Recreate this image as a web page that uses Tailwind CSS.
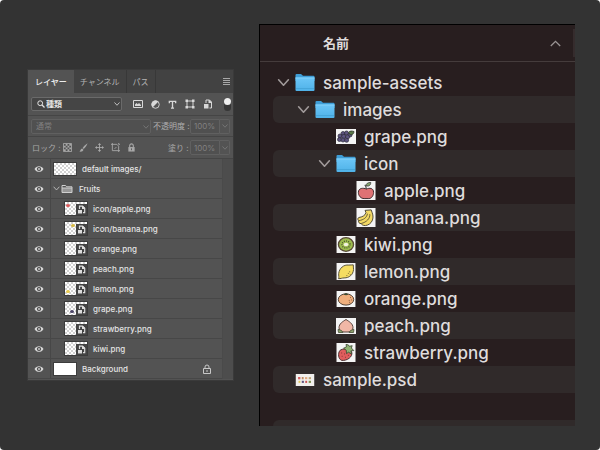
<!DOCTYPE html>
<html lang="ja">
<head>
<meta charset="utf-8">
<meta name="viewport" content="width=device-width, initial-scale=1">
<title>sample-assets</title>
<script src="https://cdn.jsdelivr.net/npm/@tailwindcss/browser@4"></script>
</head>
<body class="bg-white font-['Inter','Noto_Sans_CJK_JP',sans-serif]">

<svg class="absolute size-0" aria-hidden="true">
  <defs>
    <linearGradient id="blue" x1="0" y1="0" x2="0" y2="1"><stop offset="0" stop-color="#6cc6f7"/><stop offset="1" stop-color="#4fb2e8"/></linearGradient>
  </defs>
  <symbol id="down" viewBox="0 0 12 12"><path d="M1.5 3.5 6 8.5l4.500-5" fill="none" stroke="currentColor" stroke-width="1.500" stroke-linecap="round" stroke-linejoin="round"/></symbol>
  <symbol id="eye" viewBox="0 0 10 8"><path d="M.5 4C2.500.2 7.500.2 9.500 4 7.500 7.800 2.500 7.800.5 4z" fill="#d8d8d8"/><circle cx="5" cy="4" r="2.100" fill="#4a4a4a"/><circle cx="5" cy="4" r="1" fill="#c8c8c8"/></symbol>
  <symbol id="group" viewBox="0 0 12 10"><path d="M1 8.500v-7h3.600l1 1.300H11v5.700z" fill="none" stroke="#d0d0d0"/><path d="M1 4h10v4.500H1z" fill="#d0d0d0" opacity=".55"/><path d="M1 4h10" stroke="#d0d0d0"/></symbol>
  <symbol id="smart" viewBox="0 0 11 11"><path d="M0 0h11v11H0z" fill="#444"/><path d="M3.500 5V2.200H6.500L8.700 4.300V8.700H7" fill="none" stroke="#ddd" stroke-width="1.200"/><path d="M6 2v3h3V4L7 2z" fill="#ddd"/><path d="M2 6h4v3.500H2z" fill="#ddd"/></symbol>
  <symbol id="folder" viewBox="0 0 20 19"><path d="M.5 2Q.5 1 1.500 1H6l2 1.800h10.500q1 0 1 1V8H.5z" fill="#3e9dd6"/><path d="M.5 4.500h19V17q0 1-1 1h-17q-1 0-1-1z" fill="url(#blue)"/><path d="M.5 5h19" stroke="#83d2fb"/><path d="M1 15.500h18" stroke="#43a2d6" stroke-width=".8"/></symbol>
  <symbol id="grape" viewBox="0 0 20 15"><path d="M0 0h20v15H0z" fill="#f4f4f4"/><g fill="#5d547f" stroke="#292738" stroke-width=".7"><circle cx="7" cy="4.500" r="2"/><circle cx="10.500" cy="4" r="2"/><circle cx="14" cy="6" r="2"/><circle cx="4" cy="7" r="2"/><circle cx="7.700" cy="7.500" r="2.100"/><circle cx="11.500" cy="8" r="2.100"/><circle cx="3.500" cy="10.500" r="2"/><circle cx="7" cy="11" r="2"/><circle cx="10.600" cy="11.300" r="2"/></g><path d="M12.500 3.500C14 1.500 16 2 18 2.500c0 2-1.500 3.500-3.700 3.300z" fill="#5a7a48" stroke="#2d3528" stroke-width=".8"/></symbol>
  <symbol id="apple" viewBox="0 0 20 20"><path d="M0 0h20v20H0z" fill="#f4f4f4"/><path d="M10.500 8.500c3-1.500 7.500-1.300 7.500 3.500 0 3-2 6.500-5 6.500H8c-3.500 0-6-3-6-6.500 0-4.800 5-5 8.500-3.500z" fill="#df7274" stroke="#3a2729"/><path d="M10.300 8.500q0-3-1.600-4.500" fill="none" stroke="#383533" stroke-width="1.100"/><path d="M10 5c0-2.300 2-3.500 5-3.500 0 3-2 4.500-5 3.500z" fill="#87a56e" stroke="#333" stroke-width=".8"/></symbol>
  <symbol id="banana" viewBox="0 0 20 20"><path d="M0 0h20v20H0z" fill="#f4f4f4"/><path d="M9 2.500 15.500 2l1 3c2.500 6-.5 12.500-7 13.500-3 0-4-1-4.500-2-2.500-.2-3-1.500-2.800-3C1 12 1.200 10.500 2.500 10 6 9.500 9 8 10 5z" fill="#f3d964" stroke="#494332"/><path d="M11.500 6C11 10 7.500 12.500 2.500 13.300M14 6.500c.5 4.500-3.500 8.500-9 9.800" fill="none" stroke="#544c30" stroke-width=".9"/></symbol>
  <symbol id="kiwi" viewBox="0 0 20 18"><path d="M0 0h20v18H0z" fill="#f4f4f4"/><ellipse cx="10" cy="9" rx="8" ry="7.200" fill="#9dbb4e" stroke="#584936" stroke-width="1.400"/><ellipse cx="10" cy="9" rx="4.300" ry="3.700" fill="none" stroke="#434b2d" stroke-width="1.300" stroke-dasharray="1 1.300"/><ellipse cx="10" cy="9" rx="2.500" ry="1.800" fill="#f2f2dd"/></symbol>
  <symbol id="lemon" viewBox="0 0 20 18"><path d="M0 0h20v18H0z" fill="#f4f4f4"/><path d="M2 16.500c1-1.500 0-3 .3-5.500C3 5.500 7.500 1.500 13 2.200c2 .3 3-.5 4.700-.2-.4 1.500.6 3 .3 5-.6 5.500-4.500 8.800-10 8.800-2.500 0-3.500 1-6 .7z" fill="#f5dd62" stroke="#514a34"/><path d="M12 11h.9M10.500 13.300h.9M14 12.300h.9M13.500 9.300h.9" stroke="#6a5b2e"/></symbol>
  <symbol id="orange" viewBox="0 0 20 17"><path d="M0 0h20v17H0z" fill="#f4f4f4"/><ellipse cx="10" cy="9" rx="8.200" ry="6" fill="#efae7c" stroke="#4a3a2f"/><path d="m8 3.500 4 .2M10 2v2.500" stroke="#3d4b30" stroke-width="1.300"/><path d="M14.500 7h.8M13 10h.8M15.300 9.500h.8M13.500 12h.8" stroke="#6b4630"/></symbol>
  <symbol id="peach" viewBox="0 0 20 16"><path d="M0 0h20v16H0z" fill="#f4f4f4"/><path d="M10 1.500c3 2 7 4 7 8.300 0 2.700-2.500 4.200-5 4.200H8c-2.500 0-5-1.500-5-4.200 0-4.300 4-6.300 7-8.300z" fill="#f0b7a6" stroke="#5b4640"/><path d="M2 11.500c2 0 4 1 5 3H2.500zM18 11.500c-2 0-4 1-5 3h4.500z" fill="#8da36c" stroke="#464c36" stroke-width=".8"/></symbol>
  <symbol id="strawberry" viewBox="0 0 20 20"><path d="M0 0h20v20H0z" fill="#f4f4f4"/><path d="M3.500 8C6 5.500 13 5.500 16 9.500c1.500 5-5 9.500-10.500 8.800C1.800 17 1.300 11 3.500 8z" fill="#df5d5d" stroke="#432c2c"/><path d="m7.500 5.500 3-1.500-.5-2.500 2.500.5 1 1.500 3-.7-.8 2.500 2.500 2.700-3 .2.500 3.500-3-2-2.200 1.500-.2-3.500z" fill="#90b273" stroke="#33402b" stroke-width=".8"/><path d="M5 10.500h.9M8 11.500h.9M5.500 14h.9M9 15h.9M12 13h.9" stroke="#762e30"/></symbol>
  <symbol id="psd" viewBox="0 0 20 13"><path d="M0 0h20v13H0z" fill="#f1efec"/><path d="M2.500 4.500h2.500" stroke="#d45f60" stroke-width="2.500"/><path d="M6.500 4.500h2" stroke="#bd8c62" stroke-width="2.500"/><path d="M10 4.500h2.500" stroke="#e3a77a" stroke-width="2.200"/><path d="M14 4.500h2.500" stroke="#bfa678" stroke-width="2.200"/><path d="M3 8.500h2" stroke="#e2c85c" stroke-width="2.200"/><path d="M6.500 8.500h2.300" stroke="#5d547f" stroke-width="2.300"/><path d="M10.300 8.500h2" stroke="#cc4f50" stroke-width="2.300"/><path d="M14 8.500h2.500" stroke="#7f9150" stroke-width="2.300"/></symbol>
  <symbol id="checks" viewBox="0 0 10 10"><path d="M.5.5h9v9h-9z" fill="none" stroke="currentColor"/><path d="M3 1h2v2H3zM7 1h2v2H7zM1 3h2v2H1zM5 3h2v2H5zM3 5h2v2H3zM7 5h2v2H7zM1 7h2v2H1zM5 7h2v2H5z" fill="currentColor"/></symbol>
  <symbol id="brush" viewBox="0 0 10 10"><path d="M9.500.3C7 2 5.300 3.700 4 5.500l1.300 1.300C7 5 8.500 3 9.500.3z" fill="currentColor"/><path d="M3.500 6 5 7.500C4.500 9.500 2 10 .3 9.300 1.800 8.800 1.500 6.500 3.500 6z" fill="currentColor"/></symbol>
  <symbol id="move" viewBox="0 0 10 10"><path d="M5 1v8M1 5h8" stroke="currentColor"/><path d="m5 0 1.800 2.200H3.200zM5 10 3.200 7.800h3.600zM0 5l2.200-1.800v3.600zM10 5 7.800 6.800V3.200z" fill="currentColor"/></symbol>
  <symbol id="board" viewBox="0 0 10 10"><path d="M0 1.500h6.500l2 2V10M1.500 0v8.500H10" fill="none" stroke="currentColor"/><path d="m4 6.500 2-2M8.500 0v1.500H10" fill="none" stroke="currentColor"/></symbol>
  <symbol id="lock" viewBox="0 0 10 10"><path d="M3 5V3a2 2 0 0 1 4 0v2" fill="none" stroke="currentColor" stroke-width="1.200"/><path d="M1.500 4.500h7v5h-7z" fill="currentColor"/><path d="M5 6v2" stroke="#535353"/></symbol>
  <symbol id="lockline" viewBox="0 0 10 10"><path d="M3 4.500V3a2 2 0 0 1 4 0v1.500M1.500 4.500h7v5h-7zM5 6v2" fill="none" stroke="currentColor"/></symbol>
</svg>

<main class="grid min-h-screen grid-cols-[207fr_316fr] items-start gap-x-[25px] rounded bg-[#333333] pt-6 pr-[25px] pb-6 pl-[27px]">

  <section aria-label="レイヤー" class="mt-[45px] border border-[#3a3a3a] bg-[#535353] pb-px text-[8px] leading-[10px] text-[#e4e4e4]">
    <div role="tablist" class="flex h-[23px] items-stretch bg-[#424242] text-[#b4b4b4]">
      <button role="tab" aria-selected="true" class="bg-[#535353] px-[7px] font-medium text-[#ececec]">レイヤー</button>
      <button role="tab" class="border-r border-[#383838] px-[6px]">チャンネル</button>
      <button role="tab" class="border-r border-[#383838] px-[6px]">パス</button>
      <button aria-label="メニュー" class="ml-auto px-[3px]">
        <svg class="size-[7px]" viewBox="0 0 7 7"><path d="M0 .5h7M0 2.500h7M0 4.500h7M0 6.500h7" stroke="#a8a8a8" stroke-width="1"/></svg>
      </button>
    </div>

    <div class="flex h-[23px] items-center justify-between border-b border-[#454545] pr-[2px] pl-[3px]">
      <div class="relative w-[91px]">
        <select aria-label="フィルター" class="block h-[14px] w-full appearance-none rounded-xs border border-[#6a6a6a] bg-[#454545] pl-[14px] text-[8px] leading-[12px] font-bold text-[#e4e4e4]"><option>種類</option></select>
        <svg class="pointer-events-none absolute top-[3px] left-[6px] size-2" viewBox="0 0 8 8"><circle cx="3.200" cy="3.200" r="2.400" fill="none" stroke="#e4e4e4"/><path d="m5 5 2.500 2.500" stroke="#e4e4e4" stroke-width="1.200"/></svg>
        <svg class="pointer-events-none absolute top-1 right-[2px] size-[6px]"><use href="#down"/></svg>
      </div>
      <div class="flex items-center gap-2 pl-1 text-[#d8d8d8]">
        <button aria-label="ピクセル"><svg class="block size-[10px]" viewBox="0 0 10 10"><path d="M.5 1.500h9v7h-9z" fill="none" stroke="currentColor"/><path d="M2 7V5.500L3.500 4l1.300 1.300L6 4l2 2v1z" fill="currentColor"/></svg></button>
        <button aria-label="調整"><svg class="block size-[9px]" viewBox="0 0 10 10"><circle cx="5" cy="5" r="4.200" fill="none" stroke="currentColor"/><path d="M8 2 2 8A4.200 4.200 0 0 1 8 2z" fill="currentColor"/></svg></button>
        <button aria-label="テキスト"><svg class="block size-[9px]" viewBox="0 0 10 10"><path d="M1.500 3.500V1.500h7v2M5 1.500v7.500M3.300 9h3.400" fill="none" stroke="currentColor" stroke-width="1.500"/></svg></button>
        <button aria-label="シェイプ"><svg class="block size-[10px]" viewBox="0 0 10 10"><path d="M2 2h6v6H2z" fill="none" stroke="currentColor"/><path d="M.5.5h2.500v2.500H.5zM7 .5h2.500v2.500H7zM.5 7h2.500v2.500H.5zM7 7h2.500v2.500H7z" fill="currentColor"/></svg></button>
        <button aria-label="スマートオブジェクト"><svg class="block size-[10px]" viewBox="0 0 10 10"><path d="M3 4V1h3.500L8.500 3v6H6.500" fill="none" stroke="currentColor"/><path d="M5.500 1v3h3V3l-2-2zM1 5h4.500v4.500H1z" fill="currentColor"/></svg></button>
        <button role="switch" aria-checked="true" aria-label="フィルターのオン／オフ" class="ml-[3px] flex h-[13px] w-[7px] items-start rounded-full bg-[#363636]"><span class="block size-[7px] rounded-full bg-[#eeeeee]"></span></button>
      </div>
    </div>

    <div class="flex h-[21px] items-center border-b border-[#454545] pr-[3px] pl-[3px] text-[#808080]">
      <div class="relative flex-1">
        <select aria-label="描画モード" disabled class="block h-[15px] w-full appearance-none rounded-xs border border-[#606060] bg-[#505050] pl-1 text-[8px] leading-[12px] text-[#808080]"><option>通常</option></select>
        <svg class="pointer-events-none absolute top-[5px] right-[2px] size-[6px]"><use href="#down"/></svg>
      </div>
      <label for="opacity" class="w-[39px] pl-[2px] whitespace-nowrap text-[#b0b0b0]">不透明度 :</label>
      <input id="opacity" value="100%" disabled class="h-[15px] w-[30px] rounded-l-xs border border-[#606060] bg-[#505050] pl-[3px] text-[8px]">
      <button aria-label="不透明度を変更" class="flex h-[15px] w-[10px] items-center justify-center rounded-r-xs border border-l-0 border-[#606060]"><svg class="size-[6px]"><use href="#down"/></svg></button>
    </div>

    <div class="flex h-[22px] items-center border-b border-[#454545] pr-[3px] pl-1 text-[#a8a8a8]">
      <span class="w-[31px] whitespace-nowrap">ロック :</span>
      <div class="flex flex-1 items-center gap-[7px]">
        <button aria-label="透明ピクセルをロック"><svg class="block size-[9px]"><use href="#checks"/></svg></button>
        <button aria-label="画像ピクセルをロック"><svg class="block size-[9px]"><use href="#brush"/></svg></button>
        <button aria-label="位置をロック"><svg class="block size-[9px]"><use href="#move"/></svg></button>
        <button aria-label="アートボードをロック"><svg class="block size-[9px]"><use href="#board"/></svg></button>
        <button aria-label="すべてをロック"><svg class="block size-[9px]"><use href="#lock"/></svg></button>
      </div>
      <label for="fill" class="w-[22px] whitespace-nowrap">塗り :</label>
      <input id="fill" value="100%" disabled class="h-[15px] w-[30px] rounded-l-xs border border-[#606060] bg-[#505050] pl-[3px] text-[8px] text-[#808080]">
      <button aria-label="塗りを変更" class="flex h-[15px] w-[10px] items-center justify-center rounded-r-xs border border-l-0 border-[#606060] text-[#808080]"><svg class="size-[6px]"><use href="#down"/></svg></button>
    </div>

    <ul id="layers" class="mr-[10px] border-r border-[#4a4a4a] font-medium shadow-[10px_0_0_#4d4d4d]"></ul>
  </section>

  <section aria-label="sample-assets" class="border-t border-l border-black bg-[#281e1f] text-[#dfdcdc]">
    <header class="flex h-[37px] items-stretch border-b border-[#453c3c]">
      <button class="flex flex-1 items-center justify-between pr-3 pl-[63px] text-[13px] leading-4 font-bold">名前
        <svg class="h-[7px] w-[11px] text-[#9a9494]" viewBox="0 0 11 7"><path d="m.8 6 4.700-4.700L10.200 6" fill="none" stroke="currentColor" stroke-width="1.300"/></svg>
      </button>
      <span class="my-1 w-[2px] bg-[#352c2d]"></span>
    </header>
    <ul id="files" class="pt-[7px] pl-[13px]"></ul>
  </section>
</main>

<script>
  const layers = [
    ['default images/', 'plain'], ['Fruits', 'group'],
    ['icon/apple.png', 'smart', '#dc5b5b', 3, 2], ['icon/banana.png', 'smart', '#d9bb45', 8, 2],
    ['orange.png', 'smart'], ['peach.png', 'smart'], ['lemon.png', 'smart', '#e8c94c', 3, 8],
    ['grape.png', 'smart', '#4d4668', 7, 8], ['strawberry.png', 'smart'], ['kiwi.png', 'smart'],
    ['Background', 'white'],
  ];
  const thumbs = {
    plain: () => `<span class="ml-[2px] mr-[5px] h-[14px] w-6 border border-[#3c3c3c] bg-[repeating-conic-gradient(#d2d2d2_0_25%,#ffffff_0_50%)] bg-[length:4px_4px]"></span>`,
    white: () => `<span class="ml-[2px] mr-[5px] h-[14px] w-6 border border-[#3c3c3c] bg-white"></span>`,
    group: () => `<button aria-label="開閉" class="ml-[2px] text-[#c4c4c4]"><svg class="block size-[7px]"><use href="#down"/></svg></button><svg class="ml-[1px] mr-[6px] h-[10px] w-3"><use href="#group"/></svg>`,
    smart: (c, x, y) => `<span class="ml-[13px] mr-[5px] flex h-[15px] w-6 items-end border border-[#3c3c3c] bg-[repeating-conic-gradient(#d2d2d2_0_25%,#ffffff_0_50%)] bg-[length:4px_4px]"><svg class="h-[13px] w-[11px]" viewBox="0 0 11 13">${c ? `<ellipse cx="${x}" cy="${y + 1.5}" rx="2" ry="1.600" fill="${c}"/>` : ''}</svg><svg class="size-[11px]"><use href="#smart"/></svg></span>`,
  };
  document.getElementById('layers').innerHTML = layers.map(([name, kind, c, x, y]) => `
    <li class="flex h-5 items-stretch border-b border-[#474747]">
      <button aria-label="表示" class="flex w-[23px] items-center justify-center border-r border-[#474747]"><svg class="h-2 w-[10px]"><use href="#eye"/></svg></button>
      <div class="flex flex-1 items-center">${thumbs[kind](c, x, y)}<span>${name}</span>${kind === 'white' ? '<svg class="ml-auto mr-[10px] size-[10px] text-[#c8c8c8]"><use href="#lockline"/></svg>' : ''}</div>
    </li>`).join('');

  const indent = ['pl-[4px]', 'pl-[24px]', 'pl-[45px]', 'pl-[65px]'];
  const size = {
    folder: 'h-[19px]', grape: 'h-[15px]', apple: 'h-[19px]', banana: 'h-[19px]', kiwi: 'h-[17px]',
    lemon: 'h-[17px]', orange: 'h-4', peach: 'h-4', strawberry: 'h-[19px]', psd: 'h-3',
  };
  const files = [
    [0, 'folder', 'sample-assets'], [1, 'folder', 'images'], [2, 'grape', 'grape.png'], [2, 'folder', 'icon'],
    [3, 'apple', 'apple.png'], [3, 'banana', 'banana.png'], [2, 'kiwi', 'kiwi.png'], [2, 'lemon', 'lemon.png'],
    [2, 'orange', 'orange.png'], [2, 'peach', 'peach.png'], [2, 'strawberry', 'strawberry.png'], [0, 'psd', 'sample.psd'],
  ];
  document.getElementById('files').innerHTML = files.map(([level, icon, name]) => `
    <li class="flex h-[27px] items-center rounded-l-md even:bg-[#302a2a] ${indent[level]}">
      <span class="flex w-[18px]">${icon === 'folder' ? '<button aria-label="開閉" class="text-[#a09a9a]"><svg class="block size-[13px]"><use href="#down"/></svg></button>' : ''}</span>
      <svg class="w-5 ${size[icon]}"><use href="#${icon}"/></svg>
      <span class="pl-[8px] text-[17px] leading-6 font-medium">${name}</span>
    </li>`).join('') + '<li class="h-[27px]"></li><li class="h-[6px] rounded-tl-md bg-[#302a2a]"></li>';
</script>
</body>
</html>
